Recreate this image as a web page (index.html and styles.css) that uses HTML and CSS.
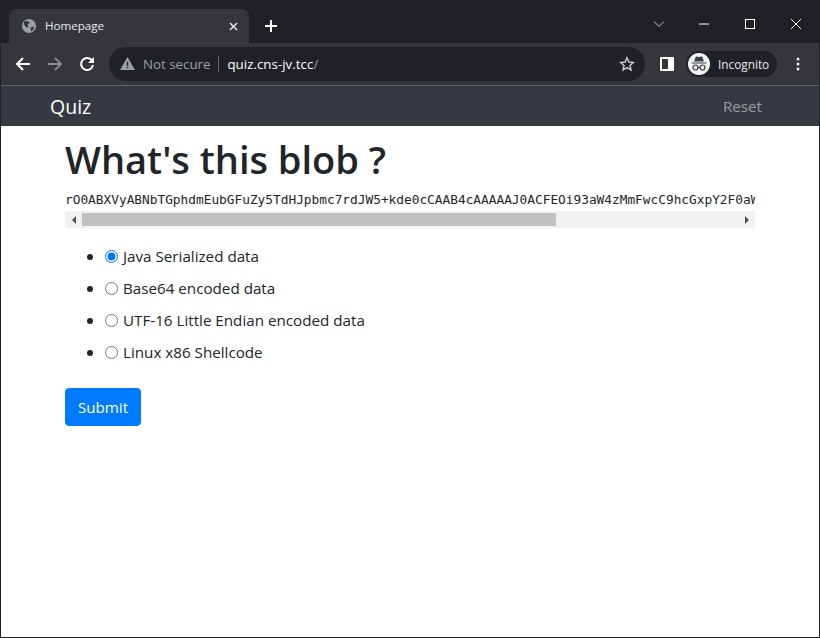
FILE: index.html
```html
<!DOCTYPE html>
<html lang="en">
<head>
<meta charset="utf-8">
<title>Homepage</title>
<link rel="stylesheet" href="styles.css">
</head>
<body>
<div class="window">
  <div class="tabstrip">
    <div class="tab">
      <svg class="favicon" viewBox="0 0 16 16" width="16" height="16"><circle cx="8" cy="8" r="7" fill="#9aa0a6"/><path d="M3 3.5 7 3l1.5 2-2 1.5L7.5 9l-2 .5L3 6.5zM9.5 9.5l3.5-1-.5 3-2.5 2z" fill="#35363a"/></svg>
      <span class="tab-title">Homepage</span>
      <svg class="tab-close" viewBox="0 0 10 10" width="10" height="10"><path d="M1 1l8 8M9 1 1 9" stroke="#e8eaed" stroke-width="1.6"/></svg>
    </div>
    <svg class="newtab" viewBox="0 0 12 12" width="12" height="12"><path d="M6 0v12M0 6h12" stroke="#fff" stroke-width="2"/></svg>
    <div class="winctl">
      <svg viewBox="0 0 12 12" width="12" height="12" class="ctl-chevron"><path d="M1 3.5 6 8.5l5-5" fill="none" stroke="#c4c7c5" stroke-width="1"/></svg>
      <svg viewBox="0 0 10 10" width="10" height="10" class="ctl-min"><path d="M0 5h10" stroke="#fff" stroke-width="1"/></svg>
      <svg viewBox="0 0 10 10" width="10" height="10" class="ctl-max"><rect x=".5" y=".5" width="9" height="9" fill="none" stroke="#fff"/></svg>
      <svg viewBox="0 0 10 10" width="10" height="10" class="ctl-x"><path d="M0 0l10 10M10 0 0 10" stroke="#fff" stroke-width="1"/></svg>
    </div>
  </div>
  <div class="toolbar">
    <svg class="nav-icon" viewBox="0 0 16 16" width="16" height="16"><path d="M15 8H2M8 2 2 8l6 6" fill="none" stroke="#fff" stroke-width="2"/></svg>
    <svg class="nav-icon dim" viewBox="0 0 16 16" width="16" height="16"><path d="M1 8h13M8 2l6 6-6 6" fill="none" stroke="#85888c" stroke-width="2"/></svg>
    <svg class="nav-icon" viewBox="0 0 16 16" width="16" height="16"><path d="M13.3 5A6 6 0 1 0 14 9" fill="none" stroke="#fff" stroke-width="2"/><path d="M15 1v6H9z" fill="#fff"/></svg>
    <div class="omnibox">
      <svg viewBox="0 0 16 14" width="15" height="13" class="warn"><path d="M8 0 16 14H0z" fill="#9aa0a6"/><path d="M7.2 5h1.6v4.5H7.2zM7.2 10.5h1.6V12H7.2z" fill="#202124"/></svg>
      <span class="notsecure">Not secure</span>
      <span class="sep"></span>
      <span class="url">quiz.cns-jv.tcc<span class="url-dim">/</span></span>
      <svg class="star" viewBox="0 0 16 16" width="16" height="16"><path d="M8 1.8 9.9 6l4.5.5-3.4 3 1 4.5L8 11.7 4 14l1-4.5-3.4-3L6.100 6z" fill="none" stroke="#c7c9cc" stroke-width="1.5"/></svg>
    </div>
    <svg class="sidepanel" viewBox="0 0 14 14" width="14" height="14"><path d="M0 0h14v14H0zM2 2v10h6V2z" fill="#fff" fill-rule="evenodd"/></svg>
    <div class="incognito">
      <span class="inc-badge"><svg viewBox="0 0 22 22" width="22" height="22"><path d="M7 5.500 8 3.500l3 .6 3-.6 1 2 .8 3H6.200zM3.500 9.500h15v1h-15z" fill="#3c4043"/><circle cx="7.500" cy="14.500" r="2.500" fill="none" stroke="#3c4043" stroke-width="1.200"/><circle cx="14.500" cy="14.500" r="2.500" fill="none" stroke="#3c4043" stroke-width="1.200"/><path d="M10 14.500h2" stroke="#3c4043" stroke-width="1.200"/></svg></span>
      <span class="inc-label">Incognito</span>
    </div>
    <svg class="kebab" viewBox="0 0 4 14" width="4" height="14"><circle cx="2" cy="2" r="1.500" fill="#e8eaed"/><circle cx="2" cy="7" r="1.500" fill="#e8eaed"/><circle cx="2" cy="12" r="1.500" fill="#e8eaed"/></svg>
  </div>
  <nav class="navbar">
    <a class="brand">Quiz</a>
    <a class="reset">Reset</a>
  </nav>
  <main class="content">
    <h1 class="title">What's this blob ?</h1>
    <div class="blob">
      <pre class="blob-text">rO0ABXVyABNbTGphdmEubGFuZy5TdHJpbmc7rdJW5+kde0cCAAB4cAAAAAJ0ACFEOi93aW4zMmFwcC9hcGxpY2F0aW9uLmV4ZQ</pre>
      <div class="hscroll">
        <span class="arrow arrow-left"></span>
        <div class="track"><div class="thumb"></div></div>
        <span class="arrow arrow-right"></span>
      </div>
    </div>
    <form>
      <ul class="options">
        <li><label class="option"><input type="radio" name="a" checked>Java Serialized data</label></li>
        <li><label class="option"><input type="radio" name="a">Base64 encoded data</label></li>
        <li><label class="option"><input type="radio" name="a">UTF-16 Little Endian encoded data</label></li>
        <li><label class="option"><input type="radio" name="a">Linux x86 Shellcode</label></li>
      </ul>
      <button type="button" class="submit">Submit</button>
    </form>
  </main>
</div>
</body>
</html>
```
FILE: styles.css
```css
* { box-sizing: border-box; }
html, body { margin: 0; height: 100%; }
body { font-family: "Open Sans", "Noto Sans", sans-serif; color: #212529; background: #fff; overflow: hidden; }
.window { width: 820px; height: 638px; display: flex; flex-direction: column; border: 1px solid #202124; border-top: 0; background: #fff; }

.tabstrip { height: 43px; flex: none; background: #202124; display: flex; align-items: flex-start; padding: 9px 0 0 8px; }
.tab { width: 240px; height: 34px; background: #35363a; border-radius: 8px 8px 0 0; display: flex; align-items: center; padding: 0 11px 0 12px; color: #e8eaed; font-size: 11.6px; }
.favicon { flex: none; margin-right: 8px; }
.tab-title { flex: 1; padding-bottom: 2px; }
.tab-close { flex: none; width: 9px; height: 9px; }
.newtab { margin: 11px 0 0 16px; flex: none; }
.winctl { margin-left: auto; display: flex; align-items: center; height: 30px; }
.ctl-chevron { margin-right: 34px; }
.ctl-min { margin-right: 36px; }
.ctl-max { margin-right: 36px; }
.ctl-x { margin-right: 18px; }

.toolbar { height: 43px; flex: none; background: #35363a; border-bottom: 1px solid #5f6368; display: flex; align-items: center; padding: 0 14px 1px 14px; }
.nav-icon { flex: none; margin-right: 16px; }
.nav-icon.dim { margin-right: 16px; }
.omnibox { flex: none; width: 536px; height: 34px; margin-left: -2px; border-radius: 17px; background: #202124; display: flex; align-items: center; padding: 0 10px 0 11px; font-size: 13.3px; }
.warn { flex: none; margin-right: 8px; }
.notsecure { color: #9aa0a6; }
.sep { width: 1px; height: 16px; background: #5f6368; margin: 0 8px; }
.url { color: #fff; flex: 1; letter-spacing: .03px; }
.url-dim { color: #9aa0a6; }
.star { flex: none; }
.sidepanel { flex: none; margin-left: 15px; }
.incognito { flex: none; margin-left: 12px; width: 91px; height: 26px; background: #202124; border-radius: 13px; display: flex; align-items: center; padding-left: 2px; color: #e8eaed; font-size: 11.8px; }
.inc-badge { width: 22px; height: 22px; border-radius: 50%; background: #f1f3f4; margin-right: 8px; display: block; }
.inc-badge svg { display: block; }
.inc-label { white-space: nowrap; }
.kebab { flex: none; margin-left: 19px; }

.navbar { height: 40px; flex: none; background: #343a40; display: flex; align-items: center; justify-content: space-between; padding: 0 57px 0 49px; }
.brand { color: #fff; font-size: 19.5px; }
.reset { color: rgba(255,255,255,.5); font-size: 15.2px; }

.content { flex: 1; padding: 0 64px; }
.title { margin: 9px 0 7px; font-size: 38px; line-height: 48px; font-weight: 600; }
.blob { width: 690px; }
.blob-text { margin: 0; overflow: hidden; font-family: "DejaVu Sans Mono", monospace; font-size: 12.8px; line-height: 20px; height: 21px; color: #212529; }
.hscroll { height: 17px; background: #f1f1f1; display: flex; align-items: center; }
.arrow { width: 17px; flex: none; height: 17px; display: flex; align-items: center; justify-content: center; }
.arrow::before { content: ""; border: 4px solid transparent; border-left-width: 0; border-right: 4px solid #505050; }
.arrow-right::before { border-right-width: 0; border-left: 4px solid #505050; border-right-color: transparent; }
.track { flex: 1; height: 17px; padding: 2px 0; }
.thumb { width: 474px; height: 13px; background: #c1c1c1; }

.options { margin: 16px 0 24px; padding-left: 40px; font-size: 15.2px; line-height: 24px; list-style: none; }
.options li { height: 24px; margin-bottom: 8px; display: flex; align-items: center; }
.options li::before { content: ""; flex: none; width: 6px; height: 6px; margin: 1px 12px 0 -18px; border-radius: 50%; background: #212529; }
.options li:last-child { margin-bottom: 0; }
.option { display: flex; align-items: center; height: 24px; }
.option input { margin: 0 5px 0 0; width: 13px; height: 13px; accent-color: #0075ff; }
.submit { display: block; height: 38px; width: 76px; padding: 0; border: 1px solid #007bff; border-radius: 4px; background: #007bff; color: #fff; font: inherit; font-size: 15.2px; }
```
